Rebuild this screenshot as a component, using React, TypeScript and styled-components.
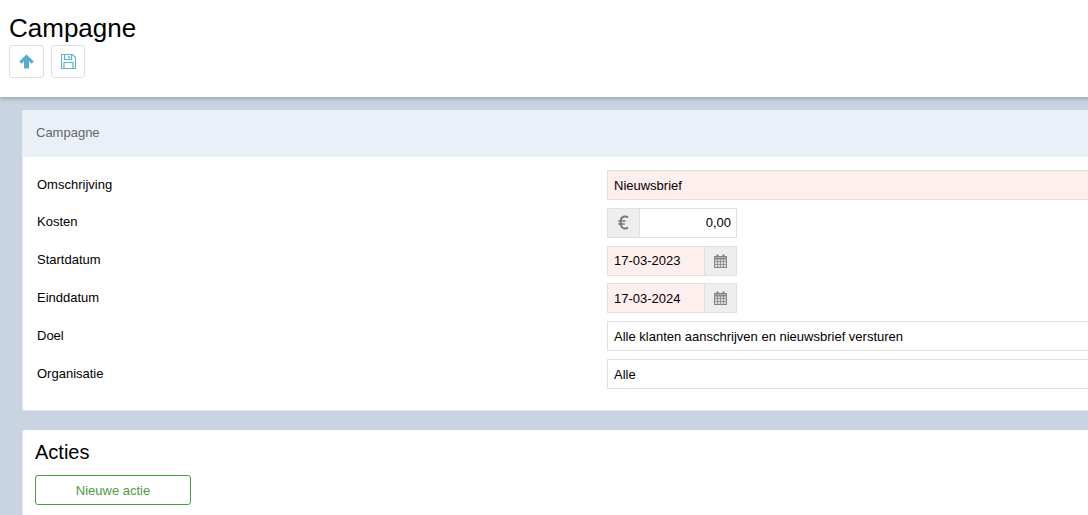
import React from "react";
import styled, { createGlobalStyle } from "styled-components";

const GlobalStyle = createGlobalStyle`
  html, body {
    margin: 0;
    height: 100%;
    overflow: hidden;
    background: #c9d4e2;
    font-family: "Liberation Sans", Arial, sans-serif;
    font-size: 13px;
    color: #000;
  }
`;

const Page = styled.div`
  width: 1400px;
`;
const Header = styled.header`
  height: 97px;
  box-sizing: border-box;
  padding: 14px 9px 0;
  background: #fff;
  box-shadow: 0 1px 5px rgba(0, 0, 0, 0.3);
`;
const PageTitle = styled.h1`
  margin: 0;
  height: 31px;
  font-size: 26px;
  line-height: 29px;
  font-weight: 400;
`;
const Toolbar = styled.div`
  display: flex;
  gap: 7px;
`;
const ToolButton = styled.button<{ $width: number }>`
  width: ${(p) => p.$width}px;
  height: 33px;
  padding: 0;
  display: flex;
  align-items: center;
  justify-content: center;
  background: #fff;
  border: 1px solid #dfdfdf;
  border-radius: 3px;
`;
const Content = styled.main`
  padding: 13px 0 0 22px;
  display: flex;
  flex-direction: column;
  gap: 19px;
`;
const Card = styled.section`
  background: #fff;
  border-radius: 3px;
  border-left: 1px solid #e2e6ea;
  border-bottom: 1px solid #dfe3e8;
`;
const CardHead = styled.div`
  height: 47px;
  box-sizing: border-box;
  margin-left: -1px;
  padding: 0 0 2px 14px;
  display: flex;
  align-items: center;
  background: #e9f0f8;
  border-radius: 3px 3px 0 0;
  color: #666;
  font-size: 13px;
`;
const Form = styled.div`
  padding: 13.2px 0 21px 14px;
  display: flex;
  flex-direction: column;
  gap: 7.77px;
`;
const Row = styled.div`
  display: grid;
  grid-template-columns: 570px 1fr;
`;
const Label = styled.label`
  line-height: 15px;
  padding-top: 6.51px;
`;
const Field = styled.div<{ $required?: boolean }>`
  height: 30px;
  box-sizing: border-box;
  padding: 0.1px 6px 0;
  display: flex;
  align-items: center;
  background: ${(p) => (p.$required ? "#ffeeee" : "#fff")};
  border: 1px solid #e0e0e0;
`;
const Group = styled.div`
  width: 130px;
  height: 30px;
  box-sizing: border-box;
  display: flex;
  border: 1px solid #e0e0e0;
`;
const Addon = styled.span<{ $side: "left" | "right" }>`
  width: 32px;
  box-sizing: border-box;
  flex: none;
  display: flex;
  align-items: center;
  justify-content: center;
  background: #eeeeee;
  border-${(p) => (p.$side === "left" ? "right" : "left")}: 1px solid #e0e0e0;
`;
const GroupValue = styled.span<{ $required?: boolean; $right?: boolean }>`
  flex: 1;
  padding: 0 5px 0 6px;
  display: flex;
  align-items: center;
  justify-content: ${(p) => (p.$right ? "flex-end" : "flex-start")};
  background: ${(p) => (p.$required ? "#ffeeee" : "#fff")};
`;
const ActionsBody = styled.div`
  height: 120px;
  padding: 9px 0 0 12px;
`;
const SectionTitle = styled.h2`
  margin: 0 0 10px;
  font-size: 20px;
  line-height: 26px;
  font-weight: 400;
`;
const NewButton = styled.button`
  width: 156px;
  height: 30px;
  padding: 0;
  background: #fff;
  border: 1px solid #4a9e3f;
  border-radius: 3px;
  color: #4f9a45;
  font-family: inherit;
  font-size: 13px;
`;

const ArrowIcon = () => (
  <svg width="15" height="15" viewBox="0 0 15 15">
    <path
      d="M7.5 0.5 L14.8 7.6 L12.6 9.8 L10 7.3 V14.5 H5 V7.3 L2.4 9.8 L0.2 7.6 Z"
      fill="#57abcd"
    />
  </svg>
);

const SaveIcon = () => (
  <svg width="15" height="15" viewBox="0 0 15 15" fill="none" stroke="#5fb4d6">
    <path d="M0.5 0.5 H11.5 L14.5 3.5 V14.5 H0.5 Z" strokeWidth="1.2" />
    <path d="M3.5 0.5 V5.5 H10.5 V0.5" strokeWidth="1.2" />
    <path d="M3 14.5 V8.5 H12 V14.5" strokeWidth="1.2" />
    <path d="M8 1.8 V4.2" strokeWidth="1.6" />
  </svg>
);

const EuroIcon = () => (
  <svg width="11" height="15" viewBox="0 0 11 15" fill="none" stroke="#7a7a7a">
    <path d="M10 2.4 C8.2 0.9 4 0.8 3 4.6 C2.3 7.2 2.3 8 3 10.6 C4 14.2 8.2 14.1 10 12.6" strokeWidth="2" />
    <path d="M0.2 6 H7.6 M0.2 9 H6.8" strokeWidth="1.5" />
  </svg>
);

const CalendarIcon = () => (
  <svg width="13" height="14" viewBox="0 0 13 14" fill="none">
    <rect x="0.5" y="2.5" width="12" height="11" fill="#d9d9de" stroke="#85858a" />
    <path d="M0.5 4.5 H12.5" stroke="#85858a" strokeWidth="2" />
    <path d="M0.5 7.5 H12.5 M0.5 10.5 H12.5 M3.5 5 V13.5 M6.5 5 V13.5 M9.5 5 V13.5" stroke="#85858a" strokeOpacity="0.75" />
    <path d="M3.5 0.5 V3 M9.5 0.5 V3" stroke="#7a7a80" strokeWidth="2" />
  </svg>
);

const DateField = ({ value }: { value: string }) => (
  <Group>
    <GroupValue $required>{value}</GroupValue>
    <Addon $side="right">
      <CalendarIcon />
    </Addon>
  </Group>
);

export default function App() {
  return (
    <Page>
      <GlobalStyle />
      <Header>
        <PageTitle>Campagne</PageTitle>
        <Toolbar>
          <ToolButton $width={35}>
            <ArrowIcon />
          </ToolButton>
          <ToolButton $width={34}>
            <SaveIcon />
          </ToolButton>
        </Toolbar>
      </Header>
      <Content>
        <Card>
          <CardHead>Campagne</CardHead>
          <Form>
            <Row>
              <Label>Omschrijving</Label>
              <Field $required>Nieuwsbrief</Field>
            </Row>
            <Row>
              <Label>Kosten</Label>
              <Group>
                <Addon $side="left">
                  <EuroIcon />
                </Addon>
                <GroupValue $right>0,00</GroupValue>
              </Group>
            </Row>
            <Row>
              <Label>Startdatum</Label>
              <DateField value="17-03-2023" />
            </Row>
            <Row>
              <Label>Einddatum</Label>
              <DateField value="17-03-2024" />
            </Row>
            <Row>
              <Label>Doel</Label>
              <Field>Alle klanten aanschrijven en nieuwsbrief versturen</Field>
            </Row>
            <Row>
              <Label>Organisatie</Label>
              <Field>Alle</Field>
            </Row>
          </Form>
        </Card>
        <Card>
          <ActionsBody>
            <SectionTitle>Acties</SectionTitle>
            <NewButton>Nieuwe actie</NewButton>
          </ActionsBody>
        </Card>
      </Content>
    </Page>
  );
}
